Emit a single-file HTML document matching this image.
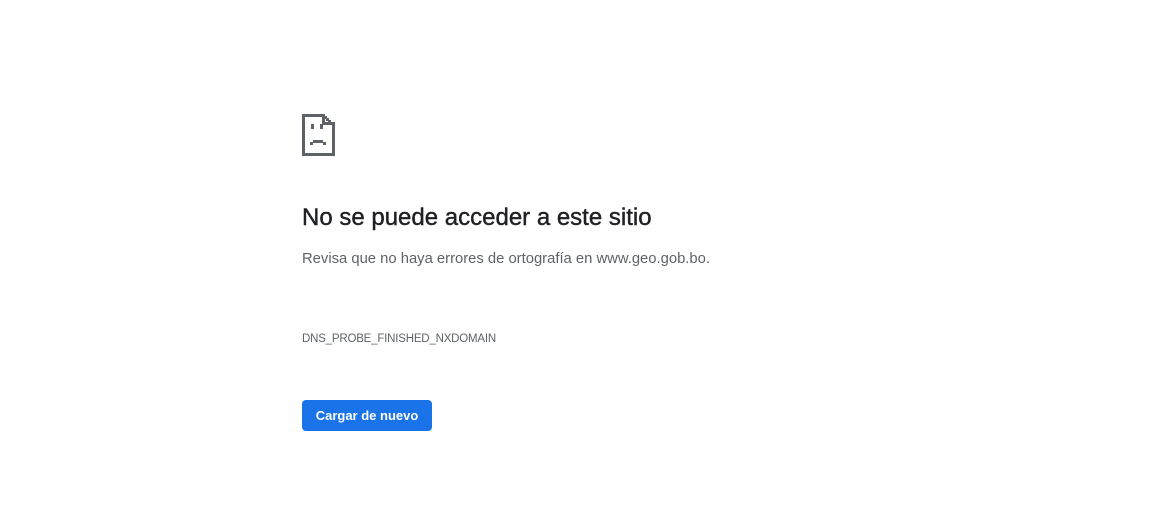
<!DOCTYPE html>
<html><head><meta charset="utf-8"><style>
body{margin:0;background:#fff;width:1160px;height:526px;position:relative;font-family:"Liberation Sans",sans-serif;overflow:hidden}
.a{position:absolute;left:302px;white-space:nowrap}
h1{margin:0;font-size:24px;font-weight:normal;color:#202124;top:204px;letter-spacing:0px;-webkit-text-stroke:0.4px #202124}
.p{top:251px;font-size:14.8px;color:#5f6368}
.c{top:333px;font-size:11.5px;color:#5f6368;letter-spacing:-0.2px}
.b{top:400px;width:130px;height:31px;background:#1a73e8;border-radius:4px;color:#fff;font-size:13px;font-weight:bold;line-height:31px;text-align:center}
</style></head><body>
<svg class="a" style="top:114px" width="34" height="42" viewBox="0 0 34 42">
<g fill="#5f6368">
<rect x="0" y="0" width="22" height="3"/>
<rect x="0" y="0" width="3" height="42"/>
<rect x="0" y="39" width="33" height="3"/>
<rect x="30" y="10" width="3" height="32"/>
<rect x="20" y="0" width="3" height="11"/>
<rect x="20" y="8" width="13" height="3"/>
<rect x="22" y="2" width="3" height="3"/>
<rect x="24" y="4" width="3" height="3"/>
<rect x="26" y="6" width="3" height="3"/>
<rect x="9" y="10" width="3" height="5"/>
<rect x="18" y="10" width="3" height="5"/>
<rect x="11" y="26" width="10" height="3"/>
<rect x="8" y="28" width="3" height="3"/>
<rect x="21" y="28" width="3" height="3"/>
</g></svg>
<h1 class="a">No se puede acceder a este sitio</h1>
<div class="a p">Revisa que no haya errores de ortografía en www.geo.gob.bo.</div>
<div class="a c">DNS_PROBE_FINISHED_NXDOMAIN</div>
<div class="a b">Cargar de nuevo</div>
</body></html>
